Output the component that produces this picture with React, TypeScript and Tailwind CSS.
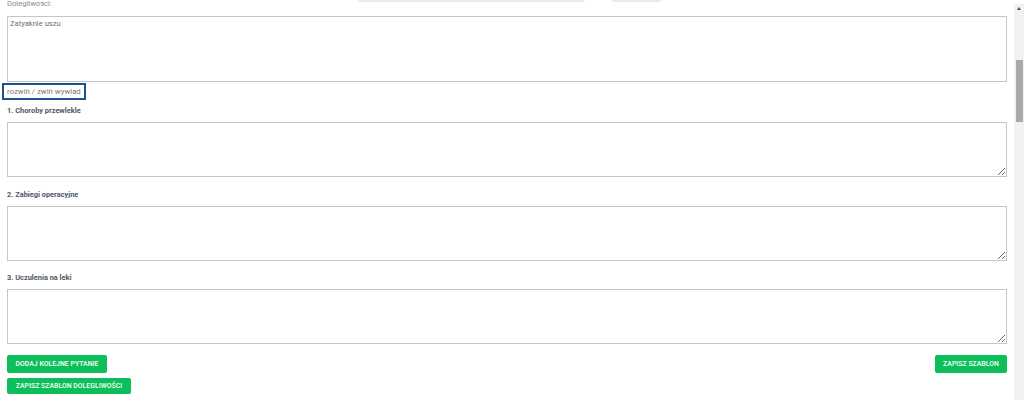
const questions = ['1. Choroby przewlekle', '2. Zabiegi operacyjne', '3. Uczulenia na leki']

const GreenButton = ({ label, className }: { label: string; className: string }) => (
  <button
    className={`flex items-center justify-center rounded-[2px] bg-[#0dbf5a] text-[6.8px] font-medium uppercase tracking-[0.01em] text-white ${className}`}
  >
    {label}
  </button>
)

const App = () => {
  return (
    <div className="flex h-[400px] w-[1024px] overflow-hidden bg-white font-['Roboto',sans-serif]">
      {/* Form area */}
      <div className="flex flex-1 flex-col pl-[7px] pr-[7px]">
        {/* bottom edges of header controls */}
        <div className="flex h-[2px] shrink-0">
          <div className="w-[351px]" />
          <div className="h-[1.5px] w-[227px] rounded-b-[2px] bg-[#e6ebf2]" />
          <div className="w-[27px]" />
          <div className="h-[1.5px] w-[49px] rounded-b-[2px] bg-[#e6ebf2]" />
        </div>

        <div className="-mt-[4px] h-[12px] text-[7.6px] leading-[12px] text-[#8a8a8a]">Dolegliwości:</div>

        <textarea
          className="mt-[6px] h-[66px] w-full shrink-0 resize-none border border-[#c6c6c6] px-[2px] py-[2px] text-[7.6px] leading-[10px] text-[#6f6f6f] outline-none"
          defaultValue="Zatyaknie uszu"
        />

        <button className="-ml-[5px] mt-[1px] flex h-[17px] w-[84px] shrink-0 items-center border-2 border-[#1d4f91] pl-[3px] text-[7.8px] text-[#7a7a7a]">
          rozwiń / zwiń wywiad
        </button>

        {questions.map((q, i) => (
          <div key={q} className="flex flex-col">
            <div
              className={`${i === 0 ? 'mt-[6px]' : 'mt-[12.5px]'} mb-[6px] h-[10px] text-[7.4px] font-bold leading-[10px] text-[#4e5766]`}
            >
              {q}
            </div>
            <textarea className="h-[55px] w-full border border-[#c6c6c6] outline-none" />
          </div>
        ))}

        <div className="mt-[11px] flex justify-between">
          <div className="flex flex-col gap-[5px]">
            <GreenButton label="Dodaj kolejne pytanie" className="h-[18px] w-[100px]" />
            <GreenButton label="Zapisz szablon dolegliwości" className="h-[16px] w-[124px]" />
          </div>
          <GreenButton label="Zapisz szablon" className="h-[18px] w-[72px]" />
        </div>
      </div>

      {/* Scrollbar */}
      <div className="mt-[4px] flex w-[10px] shrink-0 flex-col items-center bg-[#f1f1f1]">
        <div className="mt-[3px] h-0 w-0 border-x-[2.5px] border-b-[3px] border-x-transparent border-b-[#505050]" />
        <div className="mt-[50px] h-[62px] w-[7px] bg-[#a8a8a8]" />
      </div>
    </div>
  )
}

export default App
